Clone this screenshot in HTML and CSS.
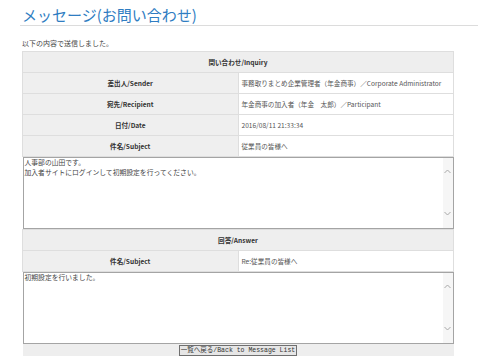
FILE: index.html
```html
<!DOCTYPE html>
<html lang="ja">
<head>
<meta charset="utf-8">
<title>メッセージ(お問い合わせ)</title>
<link rel="stylesheet" href="styles.css">
</head>
<body>
<div class="page">
  <h1 class="title">メッセージ(お問い合わせ)</h1>
  <p class="intro">以下の内容で送信しました。</p>
  <table class="msg">
    <tr><th class="head" colspan="2">問い合わせ/Inquiry</th></tr>
    <tr><th class="label">差出人/Sender</th><td class="value">事務取りまとめ企業管理者（年金商事）／Corporate Administrator</td></tr>
    <tr><th class="label">宛先/Recipient</th><td class="value">年金商事の加入者（年金　太郎）／Participant</td></tr>
    <tr><th class="label">日付/Date</th><td class="value">2016/08/11 21:33:34</td></tr>
    <tr><th class="label">件名/Subject</th><td class="value">従業員の皆様へ</td></tr>
    <tr><td class="boxcell" colspan="2">
      <div class="box">
        <div class="box-text">人事部の山田です。<br>加入者サイトにログインして初期設定を行ってください。</div>
        <div class="scroll">
          <svg class="arrow" width="7" height="5" viewBox="0 0 7 5"><path d="M0.5 4 L3.5 1 L6.5 4" fill="none" stroke="#a8a8a8" stroke-width="1"/></svg>
          <svg class="arrow" width="7" height="5" viewBox="0 0 7 5"><path d="M0.5 1 L3.5 4 L6.5 1" fill="none" stroke="#a8a8a8" stroke-width="1"/></svg>
        </div>
      </div>
    </td></tr>
    <tr><th class="head" colspan="2">回答/Answer</th></tr>
    <tr><th class="label">件名/Subject</th><td class="value">Re:従業員の皆様へ</td></tr>
    <tr><td class="boxcell" colspan="2">
      <div class="box">
        <div class="box-text">初期設定を行いました。</div>
        <div class="scroll">
          <svg class="arrow" width="7" height="5" viewBox="0 0 7 5"><path d="M0.5 4 L3.5 1 L6.5 4" fill="none" stroke="#a8a8a8" stroke-width="1"/></svg>
          <svg class="arrow" width="7" height="5" viewBox="0 0 7 5"><path d="M0.5 1 L3.5 4 L6.5 1" fill="none" stroke="#a8a8a8" stroke-width="1"/></svg>
        </div>
      </div>
    </td></tr>
    <tr><td class="actions" colspan="2"><button class="back" type="button">一覧へ戻る/Back to Message List</button></td></tr>
  </table>
</div>
</body>
</html>
```
FILE: styles.css
```css
html, body {
  margin: 0;
  padding: 0;
  background: #ffffff;
}
body {
  font-family: "Noto Sans CJK JP", "Noto Sans", sans-serif;
  color: #333333;
}
.page {
  width: 458px;
  padding-left: 20px;
}
.title {
  margin: 0;
  padding: 4px 0 0 2px;
  height: 21px;
  line-height: 21px;
  font-size: 15px;
  font-weight: normal;
  color: #2f7dc2;
  border-bottom: 1px solid #dcdcdc;
}
.intro {
  margin: 12px 0 3px 2px;
  font-size: 7px;
  line-height: 10px;
  color: #444444;
}
.msg {
  margin-left: 2px;
  width: 432px;
  border-collapse: collapse;
  font-size: 6.6px;
  table-layout: fixed;
}
.msg th, .msg td {
  border: 1px solid #dedede;
  height: 20px;
  padding: 0 3px;
  line-height: 10px;
}
.head {
  background: #eeeeee;
  font-weight: bold;
  text-align: center;
  color: #333333;
}
.label {
  width: 124px;
  background: #efefef;
  font-weight: bold;
  text-align: center;
  color: #333333;
}
.value {
  background: #ffffff;
  text-align: left;
  color: #555555;
}
.msg td.boxcell {
  padding: 0;
  height: auto;
  border: none;
}
.box {
  display: flex;
  height: 70px;
  border: 1px solid #a4a4a4;
  background: #ffffff;
}
.box-text {
  flex: 1;
  font-size: 6.8px;
  line-height: 10px;
  margin-top: -1px;
  padding: 0 1px;
  color: #444444;
}
.scroll {
  width: 10px;
  background: #f6f6f6;
  display: flex;
  flex-direction: column;
  justify-content: space-between;
  align-items: center;
  padding: 11px 0 12px;
}
.arrow {
  display: block;
}
.msg td.actions {
  background: #eeeeee;
  height: 12px;
  padding: 0;
  text-align: center;
  border: none;
  line-height: 0;
}
.back {
  margin: 0;
  padding: 0 1px;
  height: 11px;
  font-family: "Liberation Mono", "Noto Sans CJK JP", monospace;
  font-size: 6.5px;
  line-height: 9px;
  color: #333333;
  background: #e6e6e6;
  border: 1px solid #6f6f6f;
  border-radius: 0;
}
```
